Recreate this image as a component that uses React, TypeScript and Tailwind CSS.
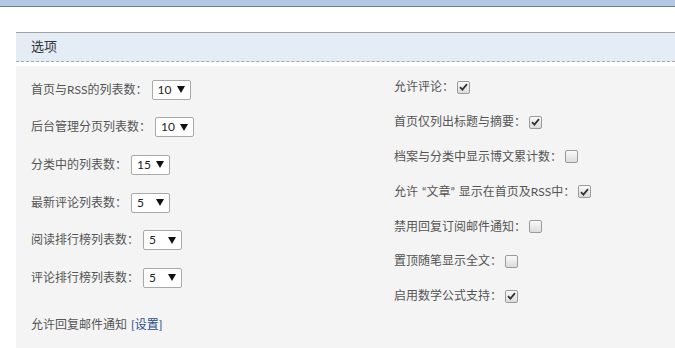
import React from 'react';

const leftRows = [
  { label: '首页与RSS的列表数：', value: '10' },
  { label: '后台管理分页列表数：', value: '10' },
  { label: '分类中的列表数：', value: '15' },
  { label: '最新评论列表数：', value: '5' },
  { label: '阅读排行榜列表数：', value: '5' },
  { label: '评论排行榜列表数：', value: '5' },
];

const rightRows = [
  { label: '允许评论：', checked: true },
  { label: '首页仅列出标题与摘要：', checked: true },
  { label: '档案与分类中显示博文累计数：', checked: false },
  { label: '允许“文章”显示在首页及RSS中：', checked: true },
  { label: '禁用回复订阅邮件通知：', checked: false },
  { label: '置顶随笔显示全文：', checked: false },
  { label: '启用数学公式支持：', checked: true },
];

const Select: React.FC<{ value: string }> = ({ value }) => (
  <span className="ml-[4px] flex h-[20px] w-[39px] items-center justify-between rounded-[2px] border border-[#a9a9a9] bg-white pl-[5px] pr-[5px] text-[12px] text-[#222]">
    <span>{value}</span>
    <svg width="8" height="7" viewBox="0 0 8 7">
      <path d="M0 0 L8 0 L4 7 Z" fill="#111" />
    </svg>
  </span>
);

const Checkbox: React.FC<{ checked: boolean }> = ({ checked }) => (
  <span className="ml-[3px] flex h-[13px] w-[13px] items-center justify-center rounded-[2px] border border-[#9a9a9a] bg-gradient-to-b from-[#fafafa] to-[#dcdcdc]">
    {checked && (
      <svg width="9" height="8" viewBox="0 0 9 8">
        <path d="M1 4.2 L3.4 6.6 L8 1.2" fill="none" stroke="#333" strokeWidth="1.8" />
      </svg>
    )}
  </span>
);

// quote marks get a little room on their outer side
const Label: React.FC<{ text: string }> = ({ text }) => (
  <span>
    {text.split(/([“”])/).map((part, i) =>
      part === '“' ? (
        <span key={i} className="pl-[4px]">{part}</span>
      ) : part === '”' ? (
        <span key={i} className="pr-[4px]">{part}</span>
      ) : (
        <React.Fragment key={i}>{part}</React.Fragment>
      )
    )}
  </span>
);

const App: React.FC = () => {
  return (
    <div
      className="h-[348px] w-[675px] overflow-hidden bg-white text-[12px] text-[#555]"
      style={{ fontFamily: 'Lato, "Noto Sans CJK SC", sans-serif' }}
    >
      {/* top bar */}
      <div className="h-[7px] border-b border-[#6f7d90] bg-[#b4c8e6]"></div>

      <div className="ml-[16px] mt-[25px]">
        {/* section header */}
        <div className="border-t border-[#a3a3a3]">
          <div className="flex h-[29px] items-center border-b border-dashed border-[#a8a8a8] bg-[#e4ecf6] pl-[15px] text-[13px] text-[#333]">
            选项
          </div>
        </div>

        {/* options panel */}
        <div className="mt-[4px] h-[300px] bg-[#f4f4f4] pl-[15px]">
          <div className="flex">
            <div className="w-[363px] pt-[5px]">
              {leftRows.map((row) => (
                <div key={row.label} className="flex h-[37.6px] items-center">
                  <span>{row.label}</span>
                  <Select value={row.value} />
                </div>
              ))}
              <div className="mt-[10px] flex h-[37.6px] items-center">
                <span>允许回复邮件通知 </span>
                <span className="ml-[4px] text-[#2d4c8e]">[设置]</span>
              </div>
            </div>
            <div className="pt-[4px]">
              {rightRows.map((row) => (
                <div key={row.label} className="flex h-[34.8px] items-center">
                  <Label text={row.label} />
                  <Checkbox checked={row.checked} />
                </div>
              ))}
            </div>
          </div>
        </div>
      </div>
    </div>
  );
};

export default App;
